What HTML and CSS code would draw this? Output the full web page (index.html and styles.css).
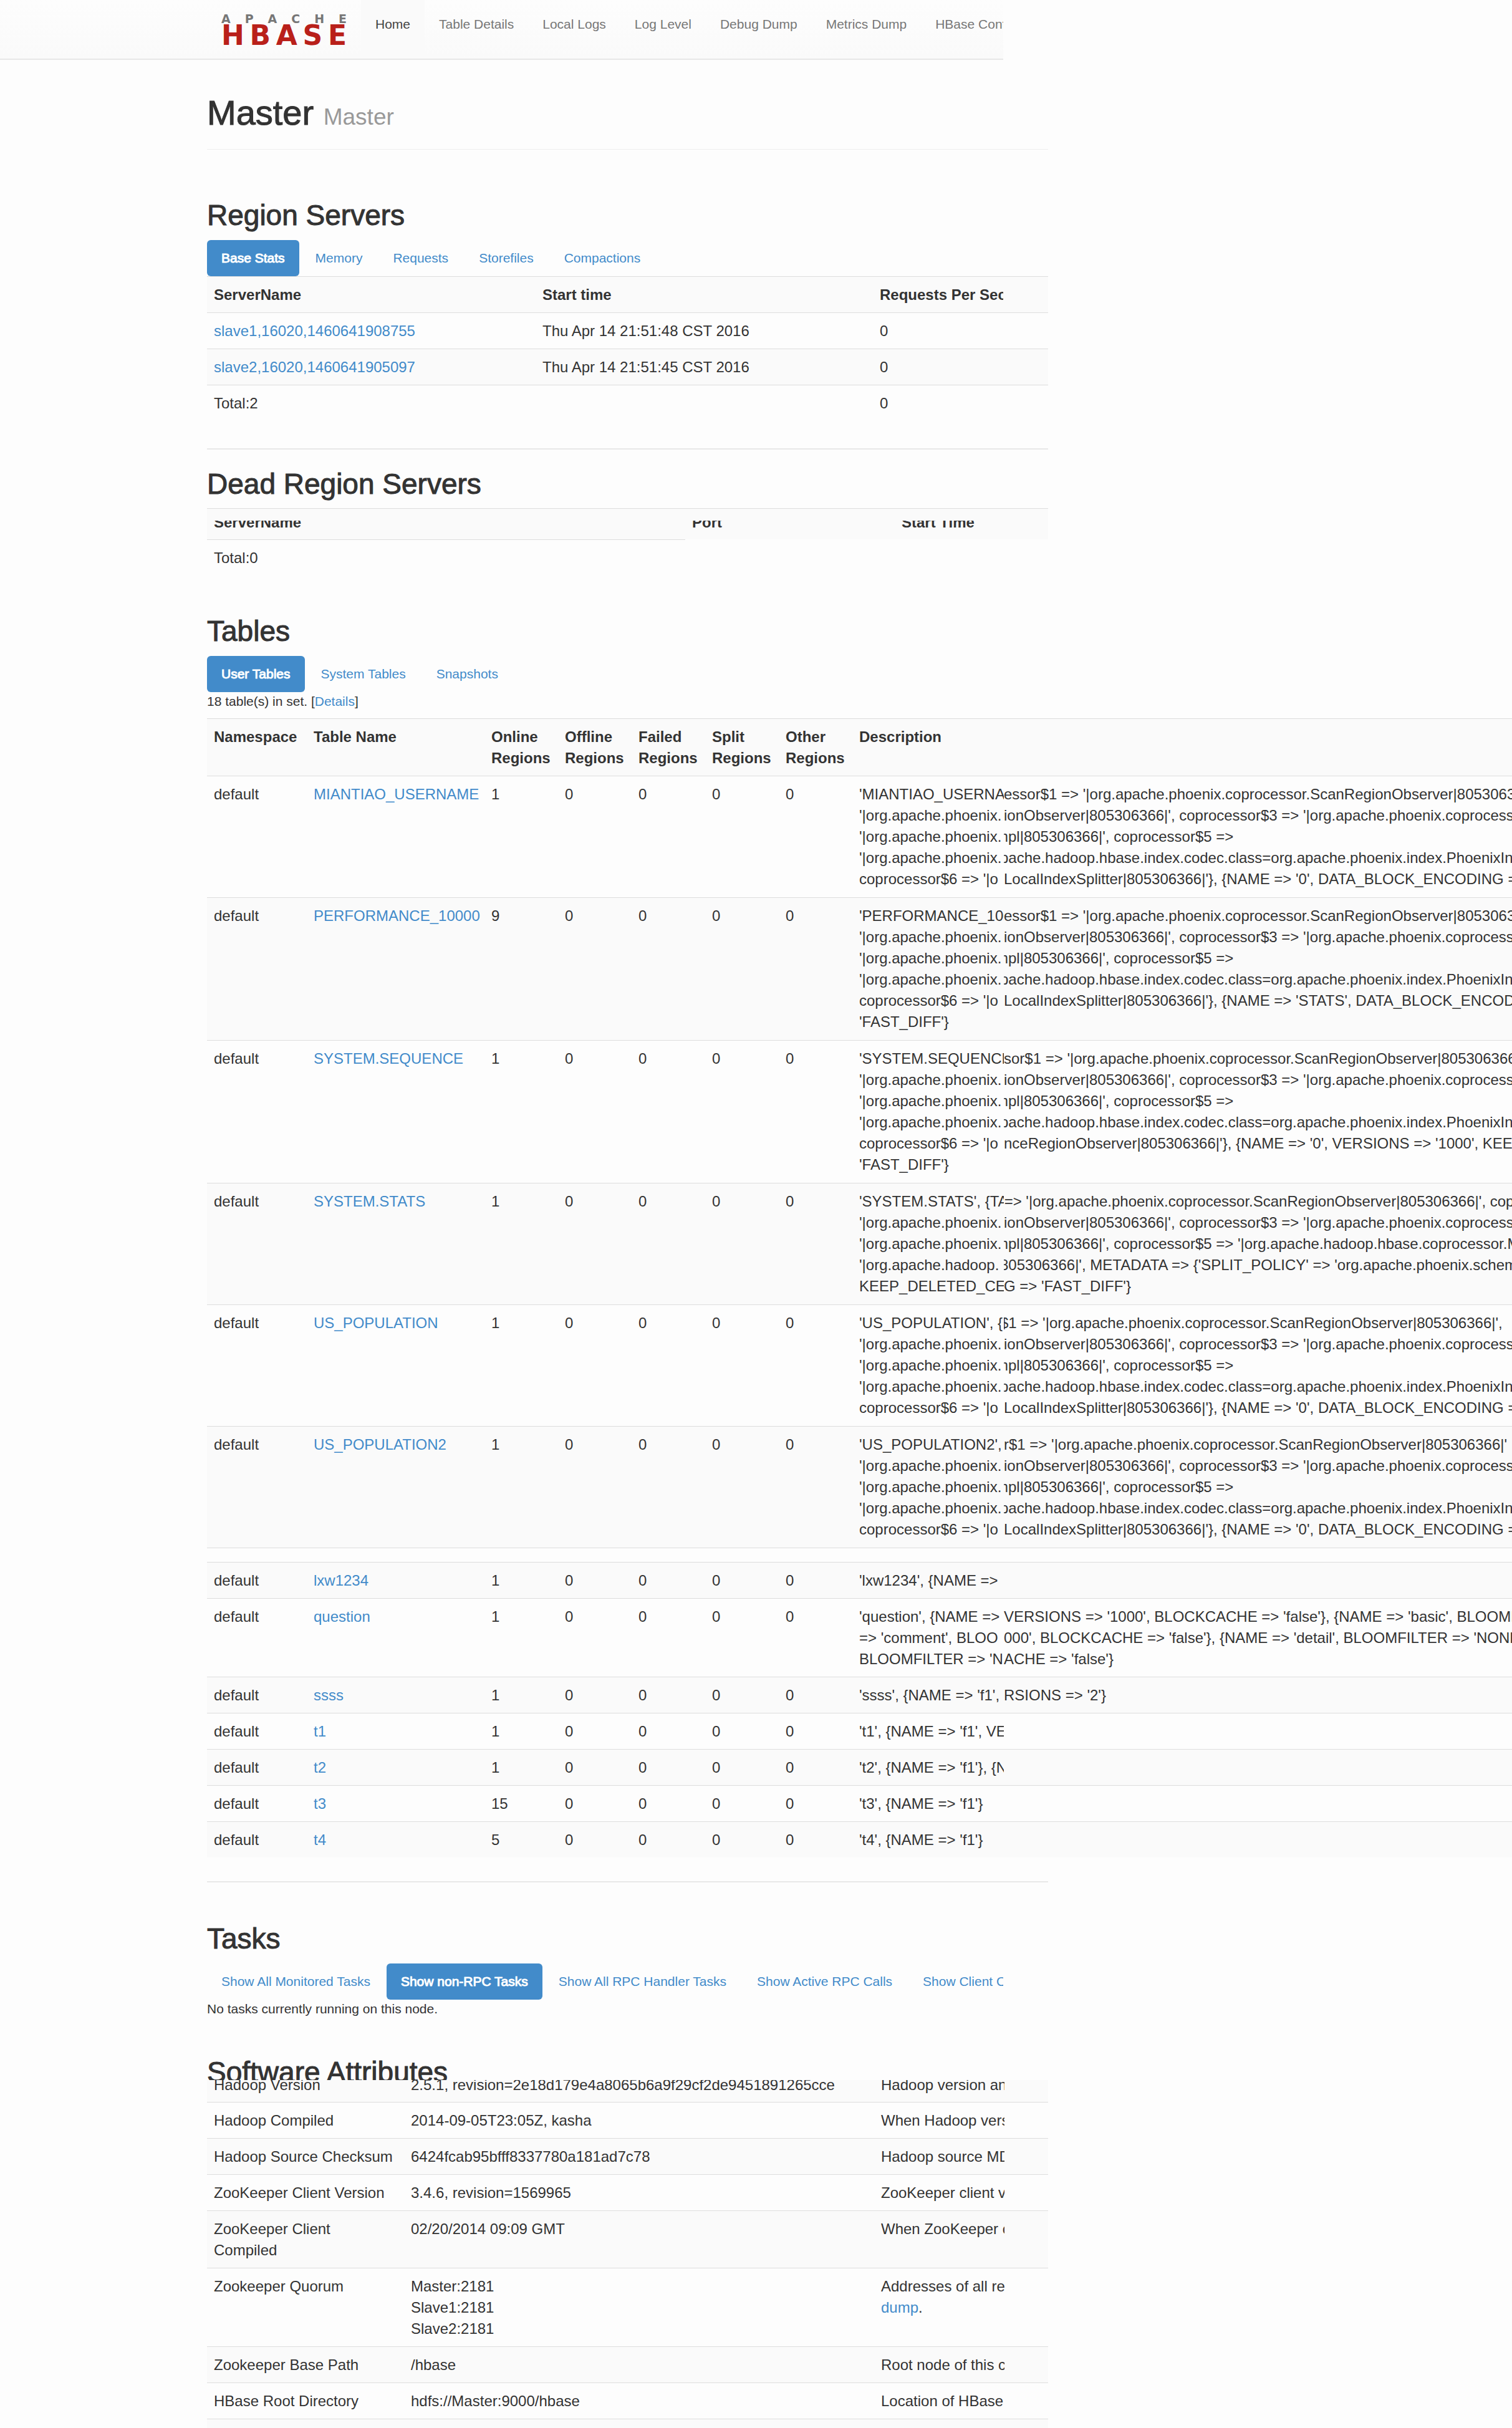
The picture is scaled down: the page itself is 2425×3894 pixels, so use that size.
FILE: index.html
```html
<!DOCTYPE html>
<html lang="en">
<head>
  <meta charset="UTF-8">
  <meta name="viewport" content="width=device-width, initial-scale=1.0">
  <title>Master: Master</title>
  <link rel="stylesheet" href="styles.css">
</head>
<body>
  <nav class="navbar">
    <a class="logo" href="#">
      <span class="logo-top"><span>A</span><span>P</span><span>A</span><span>C</span><span>H</span><span>E</span></span>
      <span class="logo-name"><span>H</span><span>B</span><span>A</span><span>S</span><span>E</span></span>
    </a>
    <ul class="nav">
      <li class="active"><a href="#">Home</a></li>
      <li><a href="#">Table Details</a></li>
      <li><a href="#">Local Logs</a></li>
      <li><a href="#">Log Level</a></li>
      <li><a href="#">Debug Dump</a></li>
      <li><a href="#">Metrics Dump</a></li>
      <li><a href="#">HBase Configuration</a></li>
    </ul>
  </nav>

  <div class="container">
    <header class="page-header">
      <h1>Master <small>Master</small></h1>
    </header>

    <!-- Region servers -->
    <section class="servers">
      <h2>Region Servers</h2>
      <ul class="pills">
        <li class="active"><a href="#">Base Stats</a></li>
        <li><a href="#">Memory</a></li>
        <li><a href="#">Requests</a></li>
        <li><a href="#">Storefiles</a></li>
        <li><a href="#">Compactions</a></li>
      </ul>
      <table class="table server-table">
        <tr><th class="name">ServerName</th><th class="start">Start time</th><th><span class="clip">Requests Per Second</span></th></tr>
        <tr><td><a href="#">slave1,16020,1460641908755</a></td><td>Thu Apr 14 21:51:48 CST 2016</td><td>0</td></tr>
        <tr><td><a href="#">slave2,16020,1460641905097</a></td><td>Thu Apr 14 21:51:45 CST 2016</td><td>0</td></tr>
        <tr><td>Total:2</td><td></td><td>0</td></tr>
      </table>
    </section>

    <section class="dead">
      <h2>Dead Region Servers</h2>
      <table class="table dead-table">
        <tr><th class="name"><span class="sliced">ServerName</span></th><th class="port"><span class="sliced">Port</span></th><th><span class="sliced">Start Time</span></th></tr>
        <tr><td>Total:0</td><td></td><td></td></tr>
      </table>
    </section>

    <!-- Tables -->
    <section class="tables">
      <h2>Tables</h2>
      <ul class="pills">
        <li class="active"><a href="#">User Tables</a></li>
        <li><a href="#">System Tables</a></li>
        <li><a href="#">Snapshots</a></li>
      </ul>
      <p>18 table(s) in set. [<a href="#">Details</a>]</p>
    </section>
  </div>

  <div class="wide">
    <table class="table user-tables">
      <colgroup>
        <col class="c-space"><col class="c-name"><col class="c-num"><col class="c-num"><col class="c-num"><col class="c-num"><col class="c-num"><col>
      </colgroup>
      <tr><th>Namespace</th><th>Table Name</th><th>Online Regions</th><th>Offline Regions</th><th>Failed Regions</th><th>Split Regions</th><th>Other Regions</th><th>Description</th></tr>
      <tr class="tall">
        <td>default</td><td><a href="#">MIANTIAO_USERNAME</a></td><td>1</td><td>0</td><td>0</td><td>0</td><td>0</td>
        <td>
          <div class="line"><span>'MIANTIAO_USERNA</span><span>essor$1 =&gt; '|org.apache.phoenix.coprocessor.ScanRegionObserver|805306366|'</span></div>
          <div class="line"><span>'|org.apache.phoenix.</span><span>ionObserver|805306366|', coprocessor$3 =&gt; '|org.apache.phoenix.coprocessor</span></div>
          <div class="line"><span>'|org.apache.phoenix.</span><span class="cut-m">mpl|805306366|', coprocessor$5 =&gt;</span></div>
          <div class="line"><span>'|org.apache.phoenix.</span><span class="cut">pache.hadoop.hbase.index.codec.class=org.apache.phoenix.index.PhoenixIndexCodec</span></div>
          <div class="line"><span>coprocessor$6 =&gt; '|o</span><span>LocalIndexSplitter|805306366|'}, {NAME =&gt; '0', DATA_BLOCK_ENCODING =&gt;</span></div>
        </td>
      </tr>
      <tr class="tall">
        <td>default</td><td><a href="#">PERFORMANCE_10000</a></td><td>9</td><td>0</td><td>0</td><td>0</td><td>0</td>
        <td>
          <div class="line"><span>'PERFORMANCE_10000</span><span>essor$1 =&gt; '|org.apache.phoenix.coprocessor.ScanRegionObserver|805306366|'</span></div>
          <div class="line"><span>'|org.apache.phoenix.</span><span>ionObserver|805306366|', coprocessor$3 =&gt; '|org.apache.phoenix.coprocessor</span></div>
          <div class="line"><span>'|org.apache.phoenix.</span><span class="cut-m">mpl|805306366|', coprocessor$5 =&gt;</span></div>
          <div class="line"><span>'|org.apache.phoenix.</span><span class="cut">pache.hadoop.hbase.index.codec.class=org.apache.phoenix.index.PhoenixIndexCodec</span></div>
          <div class="line"><span>coprocessor$6 =&gt; '|o</span><span>LocalIndexSplitter|805306366|'}, {NAME =&gt; 'STATS', DATA_BLOCK_ENCODING =&gt;</span></div>
          <div class="line">'FAST_DIFF'}</div>
        </td>
      </tr>
      <tr class="tall">
        <td>default</td><td><a href="#">SYSTEM.SEQUENCE</a></td><td>1</td><td>0</td><td>0</td><td>0</td><td>0</td>
        <td>
          <div class="line"><span>'SYSTEM.SEQUENCE</span><span>sor$1 =&gt; '|org.apache.phoenix.coprocessor.ScanRegionObserver|805306366|'</span></div>
          <div class="line"><span>'|org.apache.phoenix.</span><span>ionObserver|805306366|', coprocessor$3 =&gt; '|org.apache.phoenix.coprocessor</span></div>
          <div class="line"><span>'|org.apache.phoenix.</span><span class="cut-m">mpl|805306366|', coprocessor$5 =&gt;</span></div>
          <div class="line"><span>'|org.apache.phoenix.</span><span class="cut">pache.hadoop.hbase.index.codec.class=org.apache.phoenix.index.PhoenixIndexCodec</span></div>
          <div class="line"><span>coprocessor$6 =&gt; '|o</span><span>nceRegionObserver|805306366|'}, {NAME =&gt; '0', VERSIONS =&gt; '1000', KEEP_DELETED_CELLS</span></div>
          <div class="line">'FAST_DIFF'}</div>
        </td>
      </tr>
      <tr class="tall">
        <td>default</td><td><a href="#">SYSTEM.STATS</a></td><td>1</td><td>0</td><td>0</td><td>0</td><td>0</td>
        <td>
          <div class="line"><span>'SYSTEM.STATS', {TA</span><span class="cut"> =&gt; '|org.apache.phoenix.coprocessor.ScanRegionObserver|805306366|', coprocessor$2</span></div>
          <div class="line"><span>'|org.apache.phoenix.</span><span>ionObserver|805306366|', coprocessor$3 =&gt; '|org.apache.phoenix.coprocessor</span></div>
          <div class="line"><span>'|org.apache.phoenix.</span><span class="cut-m">mpl|805306366|', coprocessor$5 =&gt; '|org.apache.hadoop.hbase.coprocessor.Multi</span></div>
          <div class="line"><span>'|org.apache.hadoop.</span><span class="cut">805306366|', METADATA =&gt; {'SPLIT_POLICY' =&gt; 'org.apache.phoenix.schema</span></div>
          <div class="line"><span>KEEP_DELETED_CELL</span><span>G =&gt; 'FAST_DIFF'}</span></div>
        </td>
      </tr>
      <tr class="tall">
        <td>default</td><td><a href="#">US_POPULATION</a></td><td>1</td><td>0</td><td>0</td><td>0</td><td>0</td>
        <td>
          <div class="line"><span>'US_POPULATION', {</span><span class="cut">$1 =&gt; '|org.apache.phoenix.coprocessor.ScanRegionObserver|805306366|',</span></div>
          <div class="line"><span>'|org.apache.phoenix.</span><span>ionObserver|805306366|', coprocessor$3 =&gt; '|org.apache.phoenix.coprocessor</span></div>
          <div class="line"><span>'|org.apache.phoenix.</span><span class="cut-m">mpl|805306366|', coprocessor$5 =&gt;</span></div>
          <div class="line"><span>'|org.apache.phoenix.</span><span class="cut">pache.hadoop.hbase.index.codec.class=org.apache.phoenix.index.PhoenixIndexCodec</span></div>
          <div class="line"><span>coprocessor$6 =&gt; '|o</span><span>LocalIndexSplitter|805306366|'}, {NAME =&gt; '0', DATA_BLOCK_ENCODING =&gt;</span></div>
        </td>
      </tr>
      <tr class="tall">
        <td>default</td><td><a href="#">US_POPULATION2</a></td><td>1</td><td>0</td><td>0</td><td>0</td><td>0</td>
        <td>
          <div class="line"><span>'US_POPULATION2', </span><span>r$1 =&gt; '|org.apache.phoenix.coprocessor.ScanRegionObserver|805306366|'</span></div>
          <div class="line"><span>'|org.apache.phoenix.</span><span>ionObserver|805306366|', coprocessor$3 =&gt; '|org.apache.phoenix.coprocessor</span></div>
          <div class="line"><span>'|org.apache.phoenix.</span><span class="cut-m">mpl|805306366|', coprocessor$5 =&gt;</span></div>
          <div class="line"><span>'|org.apache.phoenix.</span><span class="cut">pache.hadoop.hbase.index.codec.class=org.apache.phoenix.index.PhoenixIndexCodec</span></div>
          <div class="line"><span>coprocessor$6 =&gt; '|o</span><span>LocalIndexSplitter|805306366|'}, {NAME =&gt; '0', DATA_BLOCK_ENCODING =&gt;</span></div>
        </td>
      </tr>
      <tr class="gap"><td colspan="8"></td></tr>
      <tr><td>default</td><td><a href="#">lxw1234</a></td><td>1</td><td>0</td><td>0</td><td>0</td><td>0</td><td>'lxw1234', {NAME =&gt;</td></tr>
      <tr>
        <td>default</td><td><a href="#">question</a></td><td>1</td><td>0</td><td>0</td><td>0</td><td>0</td>
        <td>
          <div class="line"><span>'question', {NAME =&gt;</span><span>VERSIONS =&gt; '1000', BLOCKCACHE =&gt; 'false'}, {NAME =&gt; 'basic', BLOOMFILTER</span></div>
          <div class="line"><span>=&gt; 'comment', BLOO</span><span>000', BLOCKCACHE =&gt; 'false'}, {NAME =&gt; 'detail', BLOOMFILTER =&gt; 'NONE'</span></div>
          <div class="line"><span>BLOOMFILTER =&gt; 'N</span><span>ACHE =&gt; 'false'}</span></div>
        </td>
      </tr>
      <tr><td>default</td><td><a href="#">ssss</a></td><td>1</td><td>0</td><td>0</td><td>0</td><td>0</td><td><div class="line"><span>'ssss', {NAME =&gt; 'f1',</span><span>RSIONS =&gt; '2'}</span></div></td></tr>
      <tr><td>default</td><td><a href="#">t1</a></td><td>1</td><td>0</td><td>0</td><td>0</td><td>0</td><td><div class="line"><span>'t1', {NAME =&gt; 'f1', VERSIONS</span></div></td></tr>
      <tr><td>default</td><td><a href="#">t2</a></td><td>1</td><td>0</td><td>0</td><td>0</td><td>0</td><td><div class="line"><span>'t2', {NAME =&gt; 'f1'}, {NAME</span></div></td></tr>
      <tr><td>default</td><td><a href="#">t3</a></td><td>15</td><td>0</td><td>0</td><td>0</td><td>0</td><td>'t3', {NAME =&gt; 'f1'}</td></tr>
      <tr><td>default</td><td><a href="#">t4</a></td><td>5</td><td>0</td><td>0</td><td>0</td><td>0</td><td>'t4', {NAME =&gt; 'f1'}</td></tr>
    </table>
  </div>

  <div class="container">
    <!-- Tasks -->
    <section class="tasks">
      <h2>Tasks</h2>
      <ul class="pills">
        <li><a href="#">Show All Monitored Tasks</a></li>
        <li class="active"><a href="#">Show non-RPC Tasks</a></li>
        <li><a href="#">Show All RPC Handler Tasks</a></li>
        <li><a href="#">Show Active RPC Calls</a></li>
        <li><a href="#">Show Client Operations</a></li>
      </ul>
      <p>No tasks currently running on this node.</p>
    </section>

    <!-- Software attributes -->
    <section class="software">
      <h2>Software Attributes</h2>
      <table class="table attributes">
        <tr class="first"><td class="attr"><span class="sliced">Hadoop Version</span></td><td class="value"><span class="sliced">2.5.1, revision=2e18d179e4a8065b6a9f29cf2de9451891265cce</span></td><td><span class="sliced clip">Hadoop version and revision</span></td></tr>
        <tr><td>Hadoop Compiled</td><td>2014-09-05T23:05Z, kasha</td><td><span class="clip">When Hadoop version was compiled</span></td></tr>
        <tr><td class="nowrap">Hadoop Source Checksum</td><td>6424fcab95bfff8337780a181ad7c78</td><td><span class="clip">Hadoop source MD5 checksum</span></td></tr>
        <tr><td>ZooKeeper Client Version</td><td>3.4.6, revision=1569965</td><td><span class="clip">ZooKeeper client version</span></td></tr>
        <tr><td>ZooKeeper Client<br>Compiled</td><td>02/20/2014 09:09 GMT</td><td><span class="clip">When ZooKeeper client was compiled</span></td></tr>
        <tr><td>Zookeeper Quorum</td><td>Master:2181<br>Slave1:2181<br>Slave2:2181</td><td><span class="clip">Addresses of all registered ZK servers</span><a href="#">dump</a>.</td></tr>
        <tr><td>Zookeeper Base Path</td><td>/hbase</td><td><span class="clip">Root node of this cluster in ZK</span></td></tr>
        <tr><td>HBase Root Directory</td><td>hdfs://Master:9000/hbase</td><td><span class="clip">Location of HBase home directory</span></td></tr>
        <tr class="last"><td colspan="3"></td></tr>
      </table>
    </section>
  </div>
</body>
</html>
```
FILE: styles.css
```css
* {
  margin: 0;
  padding: 0;
  box-sizing: border-box;
}

body {
  font-family: "Liberation Sans", Arial, sans-serif;
  font-size: 21px;
  line-height: 30px;
  color: #333;
  background: #fdfdfd;
  overflow-x: hidden;
}

a {
  color: #428bca;
  text-decoration: none;
}

ul {
  list-style: none;
}

/* Navbar */
.navbar {
  display: flex;
  max-width: 1609px;
  height: 96px;
  padding-left: 355px;
  background: linear-gradient(#fdfdfd, #fafafa);
  border-bottom: 2px solid #e7e7e7;
  overflow: hidden;
}

.logo {
  flex: none;
  width: 201px;
  margin-right: 23px;
  padding-top: 20px;
  font-family: "DejaVu Sans", sans-serif;
  font-weight: bold;
}

.logo-top,
.logo-name {
  display: flex;
  justify-content: space-between;
}

.logo-top {
  font-size: 19px;
  line-height: 20px;
  color: #777;
}

.logo-name {
  font-size: 44px;
  line-height: 34px;
  color: #b9201a;
}

.nav {
  display: flex;
  flex: none;
}

.nav a {
  display: block;
  height: 94px;
  padding: 24px 23px;
  color: #777;
  white-space: nowrap;
}

.nav .active a {
  color: #444;
  background: #fafafa;
}

/* Layout */
.container {
  max-width: 1681px;
  padding-left: 332px;
}

.wide {
  padding-left: 332px;
  overflow: hidden;
}

h1,
h2 {
  font-weight: normal;
  color: #333;
  -webkit-text-stroke: 1px #333;
}

h1 {
  font-size: 56px;
  line-height: 60px;
}

h1 small {
  font-size: 37px;
  line-height: 40px;
  color: #999;
  -webkit-text-stroke: 0;
}

h2 {
  font-size: 46px;
  line-height: 50px;
}

.page-header {
  padding: 55px 0 28px;
  border-bottom: 1px solid #eee;
}

.servers {
  padding: 80px 0 44px;
  border-bottom: 2px solid #e8e8e8;
}

.dead {
  padding-top: 30px;
}

.tables {
  padding-top: 64px;
}

.tasks {
  margin-top: 38px;
  padding-top: 65px;
  border-top: 2px solid #e8e8e8;
}

.software {
  padding-top: 61px;
}

.software h2 {
  height: 38px;
  overflow: hidden;
}

/* Pills */
.pills {
  display: flex;
  gap: 3px;
  max-width: 1277px;
  margin-top: 15px;
  overflow: hidden;
}

.pills a {
  display: block;
  padding: 14px 23px;
  border-radius: 6px;
  white-space: nowrap;
}

.pills .active a {
  color: #fff;
  background: #428bca;
  -webkit-text-stroke: 1px #fff;
}

/* Tables */
.table {
  width: 100%;
  table-layout: fixed;
  border-collapse: separate;
  border-spacing: 0;
  font-size: 24px;
  line-height: 34px;
}

.table th,
.table td {
  padding: 12px 11px 11px;
  border-top: 1px solid #ddd;
  text-align: left;
  vertical-align: top;
}

.table tr:nth-child(odd) {
  background: #fafafa;
}

.table .tall td {
  padding-bottom: 12px;
}

.clip {
  display: block;
  width: 198px;
  overflow: hidden;
  white-space: nowrap;
}

.sliced {
  display: block;
  height: 20px;
  line-height: 6px;
  overflow: hidden;
}

.server-table .name {
  width: 527px;
}

.server-table .start {
  width: 541px;
}

.dead-table {
  margin-top: 14px;
}

.dead-table .name {
  width: 767px;
}

.dead-table .port {
  width: 336px;
}

.dead-table th {
  padding: 19px 11px 10px;
}

.dead-table td + td {
  border-top-color: transparent;
}

.user-tables {
  margin-top: 12px;
}

.c-space {
  width: 160px;
}

.c-name {
  width: 285px;
}

.c-num {
  width: 118px;
}

.user-tables .gap td {
  height: 23px;
  padding: 0;
}

/* A description line is a clipped head followed by its tail */
.line {
  display: flex;
  white-space: pre;
}

.line span {
  flex: none;
  overflow: hidden;
}

.line span:first-child {
  width: 232px;
}

.cut {
  text-indent: -6px;
}

.cut-m {
  text-indent: -13px;
}

.attributes .attr {
  width: 316px;
}

.attributes .value {
  width: 754px;
}

.attributes .nowrap {
  white-space: nowrap;
}

.attributes .first td {
  padding-top: 0;
  border-top: none;
}

.attributes .first .sliced {
  height: 24px;
  line-height: 16px;
}

.attributes .last td {
  height: 16px;
  padding: 0;
}
```
